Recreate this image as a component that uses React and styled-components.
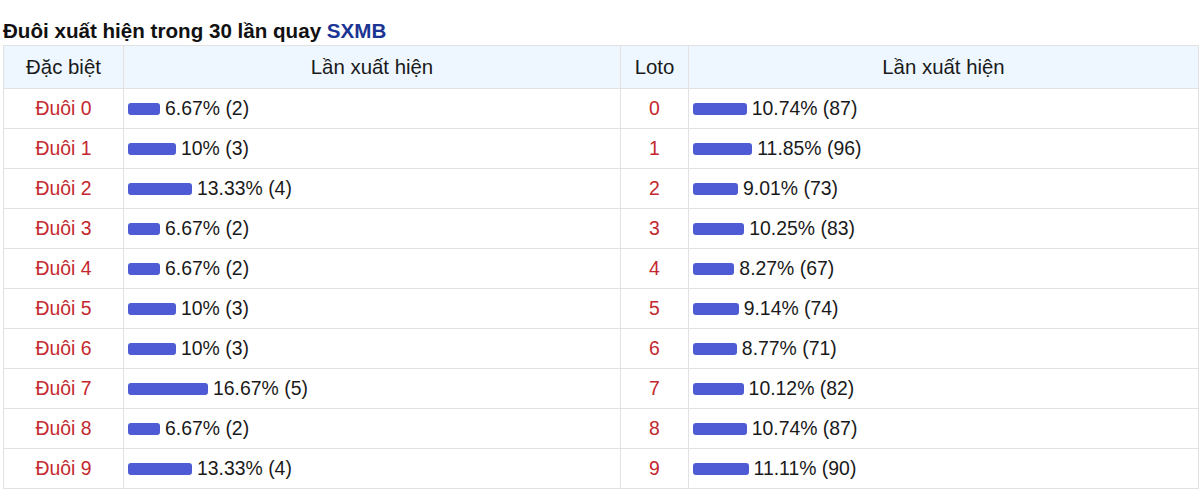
import React from "react";
import styled, { createGlobalStyle } from "styled-components";

const GlobalStyle = createGlobalStyle`
  body {
    margin: 0;
    background: #fff;
    font-family: "Liberation Sans", Arial, sans-serif;
    color: #222;
  }
`;

const special = [
  [6.67, 2],
  [10, 3],
  [13.33, 4],
  [6.67, 2],
  [6.67, 2],
  [10, 3],
  [10, 3],
  [16.67, 5],
  [6.67, 2],
  [13.33, 4],
];

const loto = [
  [10.74, 87],
  [11.85, 96],
  [9.01, 73],
  [10.25, 83],
  [8.27, 67],
  [9.14, 74],
  [8.77, 71],
  [10.12, 82],
  [10.74, 87],
  [11.11, 90],
];

const App = () => {
  return (
    <>
      <GlobalStyle />
      <Wrapper>
        <Title>
          Đuôi xuất hiện trong 30 lần quay <Brand>SXMB</Brand>
        </Title>
        <Table>
          <colgroup>
            <col style={{ width: 120 }} />
            <col style={{ width: 497 }} />
            <col style={{ width: 68 }} />
            <col style={{ width: 510 }} />
          </colgroup>
          <thead>
            <tr>
              <Th>Đặc biệt</Th>
              <Th>Lần xuất hiện</Th>
              <Th>Loto</Th>
              <Th>Lần xuất hiện</Th>
            </tr>
          </thead>
          <tbody>
            {special.map(([pct, count], i) => (
              <tr key={i}>
                <Label>Đuôi {i}</Label>
                <BarCell>
                  <Bar style={{ width: pct * 4.8 }} />
                  {pct}% ({count})
                </BarCell>
                <Label>{i}</Label>
                <BarCell>
                  <Bar style={{ width: loto[i][0] * 5 }} />
                  {loto[i][0]}% ({loto[i][1]})
                </BarCell>
              </tr>
            ))}
          </tbody>
        </Table>
      </Wrapper>
    </>
  );
};

const Wrapper = styled.div`
  padding: 17px 3px 0 3px;
  width: 1195px;
`;

const Title = styled.h2`
  margin: 0 0 1px 0;
  font-size: 20.6px;
  line-height: 27px;
  font-weight: 700;
  color: #111;
`;

const Brand = styled.span`
  color: #1c3594;
`;

const Table = styled.table`
  width: 1195px;
  border-collapse: collapse;
  table-layout: fixed;
  font-size: 19.4px;
`;

const Th = styled.th`
  height: 42px;
  padding: 0;
  background: #eef7ff;
  border: 1px solid #e2e2e2;
  font-size: 20.4px;
  font-weight: 400;
  color: #1a1a1a;
  text-align: center;
`;

const Label = styled.td`
  height: 39px;
  padding: 0;
  border: 1px solid #e2e2e2;
  text-align: center;
  color: #c4282e;
`;

const BarCell = styled.td`
  height: 39px;
  padding: 0 0 0 4px;
  border: 1px solid #e2e2e2;
  color: #1a1a1a;
  white-space: nowrap;
`;

const Bar = styled.span`
  display: inline-block;
  height: 12px;
  margin-right: 5px;
  border-radius: 3px;
  background: #4f5bd5;
  vertical-align: 0px;
`;

export default App;
